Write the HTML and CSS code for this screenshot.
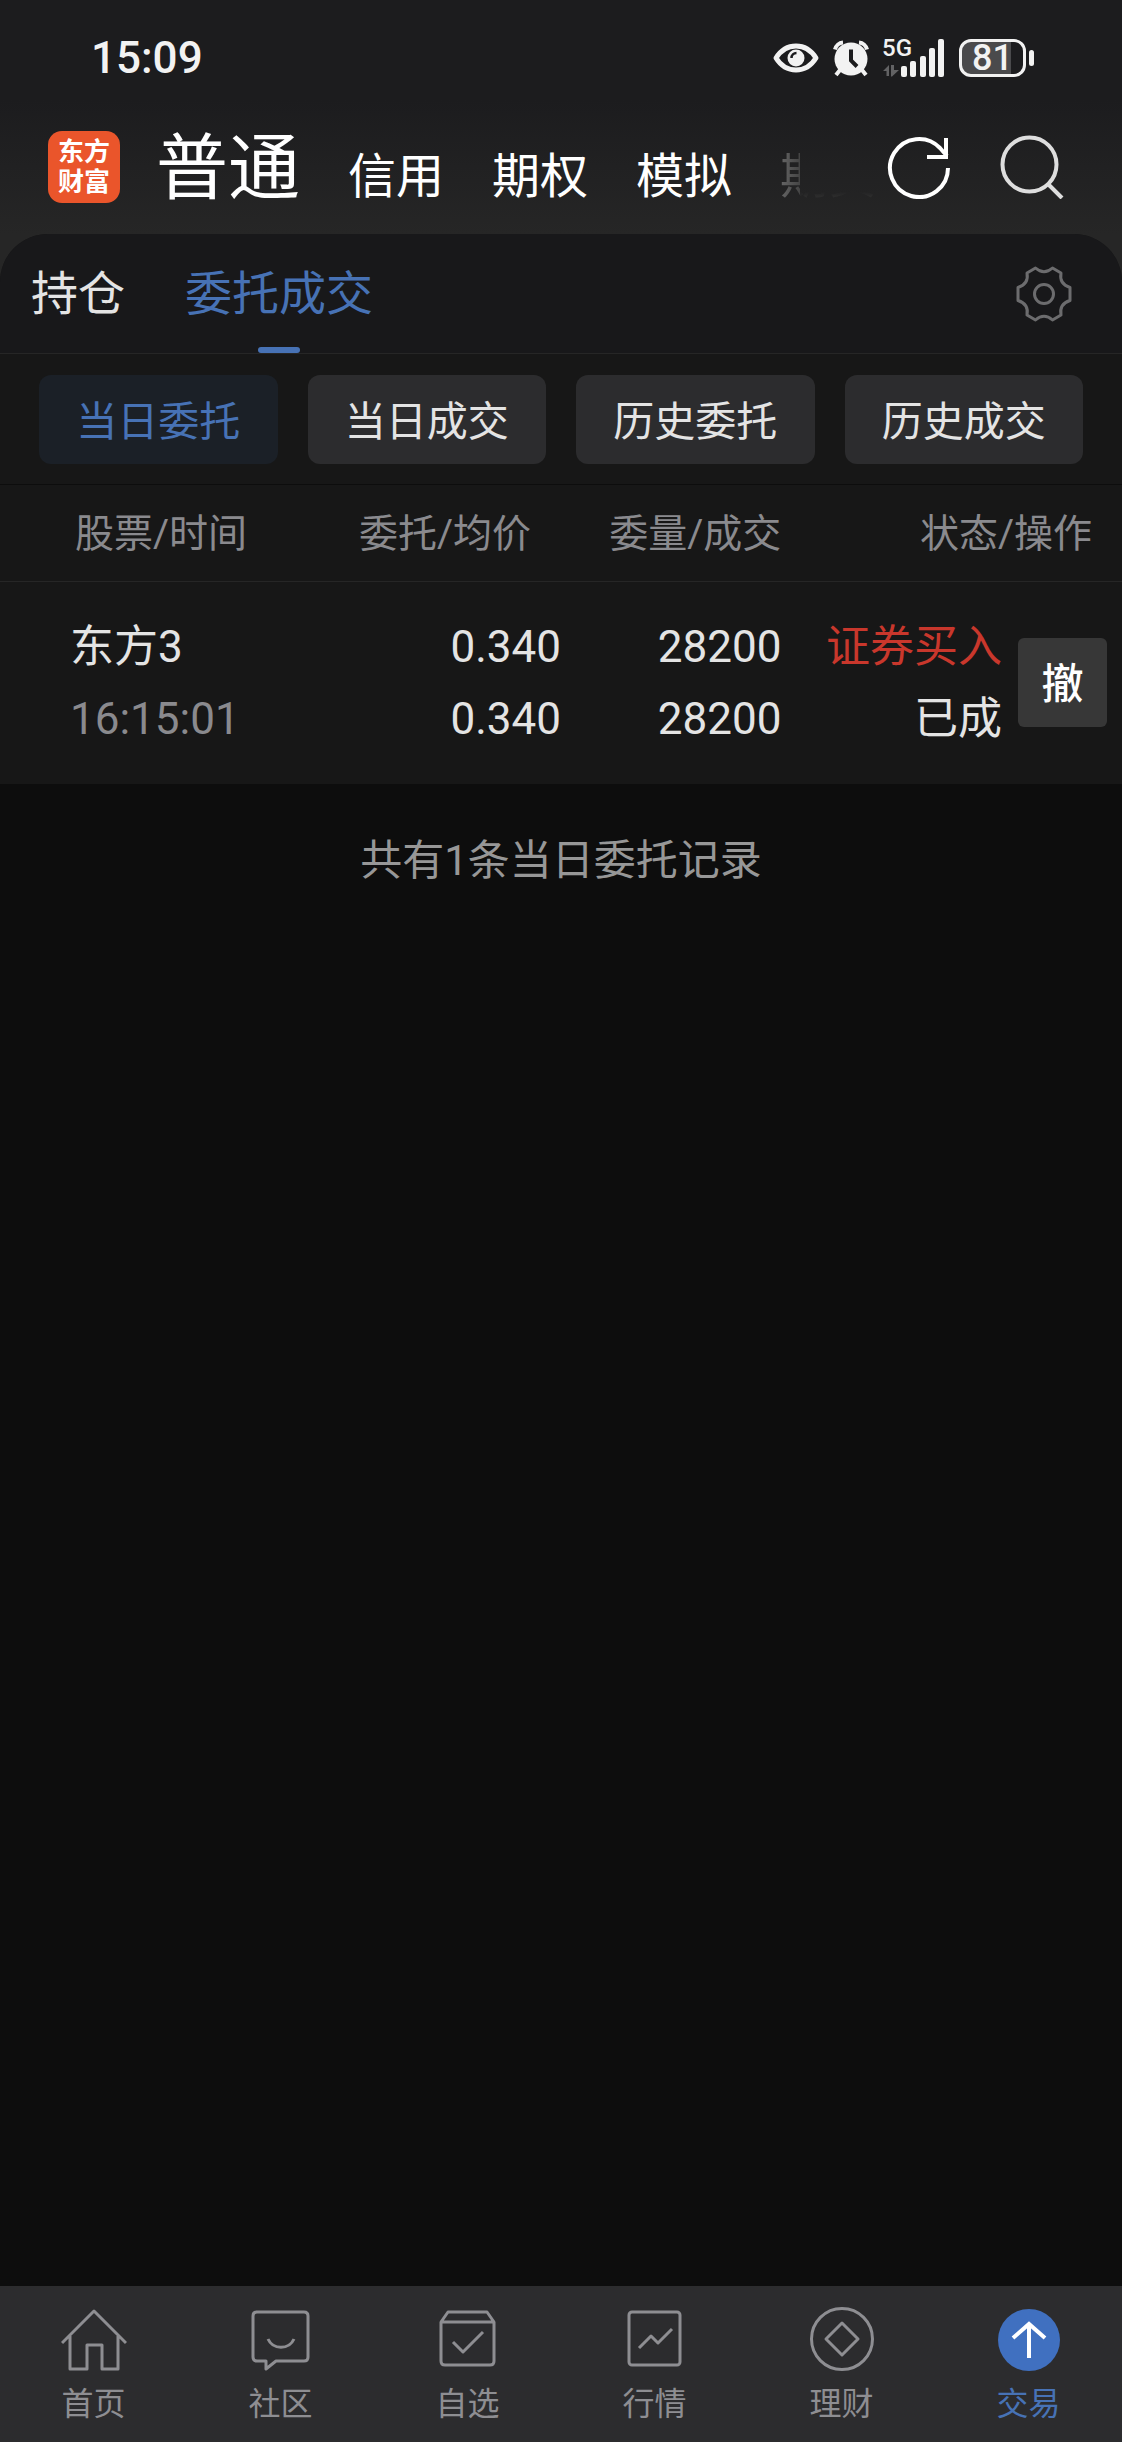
FILE: index.html
```html
<!DOCTYPE html>
<html lang="zh-CN">
<head>
    <meta charset="UTF-8">
    <meta name="viewport" content="width=device-width, initial-scale=1.0">
    <title>委托成交</title>
    <link rel="stylesheet" href="styles.css">
</head>
<body>
    <header class="top">
        <div class="status-bar">
            <span class="clock">15:09</span>
            <div class="status-icons">
                <svg class="eye" width="46" height="30" viewBox="0 0 46 30">
                    <path d="M3 15C8 7 15 3 23 3s15 4 20 12c-5 8-12 12-20 12S8 23 3 15z" fill="none" stroke="#f2f2f2" stroke-width="5" stroke-linejoin="round"/>
                    <circle cx="23" cy="15" r="8.500" fill="#f2f2f2"/>
                    <path d="M18.500 15a5 5 0 0 1 5-5" fill="none" stroke="#1c1c1e" stroke-width="2.500"/>
                </svg>
                <svg class="alarm" width="36" height="37" viewBox="0 0 36 37">
                    <circle cx="18" cy="19" r="16.500" fill="#f2f2f2"/>
                    <path d="M2 9.500A9 9 0 0 1 10 2.500M34 9.500A9 9 0 0 0 26 2.500M7 30l-4 5M29 30l4 5" fill="none" stroke="#f2f2f2" stroke-width="4"/>
                    <path d="M18 9.500v11l6 6" fill="none" stroke="#1c1c1e" stroke-width="4"/>
                </svg>
                <div class="signal">
                    <span class="network">5G</span>
                    <svg width="62" height="38" viewBox="0 0 62 38">
                        <path d="M0 32l6-6v11H3.500v-5zM8 26h3v5h5l-7 6.500H8z" fill="#626264"/>
                        <g fill="#f2f2f2">
                            <rect x="18" y="27" width="6" height="11" rx="2"/>
                            <rect x="27" y="22" width="6" height="16" rx="2"/>
                            <rect x="37" y="17" width="6" height="21" rx="2"/>
                            <rect x="46" y="9" width="6" height="29" rx="2"/>
                            <rect x="55" y="0" width="6" height="38" rx="2"/>
                        </g>
                    </svg>
                </div>
                <div class="battery"><span>81</span></div>
            </div>
        </div>
        <div class="account-bar">
            <a class="logo" href="#">东方<br>财富</a>
            <nav class="accounts">
                <a class="current" href="#">普通</a>
                <a href="#">信用</a>
                <a href="#">期权</a>
                <a href="#">模拟</a>
                <a class="fading" href="#">期货</a>
            </nav>
            <button class="icon-btn" aria-label="刷新">
                <svg width="64" height="64" viewBox="0 0 64 64" fill="none" stroke="#fff" stroke-width="4">
                    <path d="M61 33a29 29 0 1 1-8-20l7 8"/>
                    <path d="M59 3v19H40"/>
                </svg>
            </button>
            <button class="icon-btn" aria-label="搜索">
                <svg width="64" height="64" viewBox="0 0 64 64" fill="none" stroke="#dedede" stroke-width="4">
                    <circle cx="29.500" cy="29.500" r="27"/>
                    <path d="M48 49l14 14"/>
                </svg>
            </button>
        </div>
    </header>

    <main>
        <div class="tabs">
            <a href="#">持仓</a>
            <a class="active" href="#">委托成交</a>
            <button class="icon-btn settings" aria-label="设置">
                <svg width="56" height="56" viewBox="0 0 56 56" fill="none" stroke="#6c6c6e" stroke-width="3" stroke-linejoin="round">
                    <path d="M19.500 2q8.500 7.500 17 0l8.500 5q-2 11 9 14.500v13q-11 3.500-9 14.500l-8.500 5q-8.500-7.500-17 0l-8.500-5q2-11-9-14.500v-13q11-3.500 9-14.500z"/>
                    <circle cx="28" cy="28" r="9.500"/>
                </svg>
            </button>
        </div>

        <div class="filters">
            <button class="active">当日委托</button>
            <button>当日成交</button>
            <button>历史委托</button>
            <button>历史成交</button>
        </div>

        <table class="orders">
            <thead>
                <tr>
                    <th class="name">股票/时间</th>
                    <th class="price">委托/均价</th>
                    <th class="amount">委量/成交</th>
                    <th class="state">状态/操作</th>
                </tr>
            </thead>
            <tbody>
                <tr>
                    <td class="name">东方3<br><span class="time">16:15:01</span></td>
                    <td>0.340<br>0.340</td>
                    <td class="amount">28200<br>28200</td>
                    <td>
                        <div class="state-cell">
                            <div><span class="buy">证券买入</span><br>已成</div>
                            <button class="cancel">撤</button>
                        </div>
                    </td>
                </tr>
            </tbody>
        </table>
    </main>

    <p class="summary">共有1条当日委托记录</p>

    <nav class="bottom-nav">
        <a href="#">
            <svg width="66" height="66" viewBox="0 0 66 66">
                <path d="M1 37L33 5l32 32M9 30v33h17V39h15v24h16V30"/>
            </svg>
            首页
        </a>
        <a href="#">
            <svg width="66" height="66" viewBox="0 0 66 66">
                <path d="M8 6h48q4 0 4 4v41q0 4-4 4H28l-10 8v-8H9q-4 0-4-4V10q0-4 4-4zM20 33c5 11 21 11 26 0"/>
            </svg>
            社区
        </a>
        <a href="#">
            <svg width="66" height="66" viewBox="0 0 66 66">
                <path d="M6 16l7-10h39l7 10M6 16h53v39q0 4-4 4H10q-4 0-4-4zM18 36l10 10 20-20"/>
            </svg>
            自选
        </a>
        <a href="#">
            <svg width="66" height="66" viewBox="0 0 66 66">
                <rect x="7" y="6" width="51" height="53" rx="3"/>
                <path d="M17 42l12-12 7 7 14-14"/>
            </svg>
            行情
        </a>
        <a href="#">
            <svg width="66" height="66" viewBox="0 0 66 66">
                <circle cx="33" cy="33" r="30.500"/>
                <path d="M33 17l16 16-16 16-16-16z"/>
            </svg>
            理财
        </a>
        <a class="active" href="#">
            <svg width="66" height="66" viewBox="0 0 66 66">
                <circle class="disc" cx="33" cy="34" r="31"/>
                <path class="arrow" d="M33 52V19M17 32l16-14 16 14"/>
            </svg>
            交易
        </a>
    </nav>
</body>
</html>
```
FILE: styles.css
```css
* {
    box-sizing: border-box;
}
body {
    margin: 0;
    min-height: 100vh;
    display: flex;
    flex-direction: column;
    background-color: #262626;
    color: #e4e4e4;
    font-family: Roboto, "Noto Sans CJK SC", sans-serif;
}
a {
    color: inherit;
    text-decoration: none;
}
button {
    padding: 0;
    border: none;
    color: inherit;
    font-family: inherit;
    cursor: pointer;
}
svg {
    display: block;
}

/* status bar and account switcher */
.top {
    background: linear-gradient(#1c1c1e 100px, #262626 234px);
}
.status-bar {
    display: flex;
    justify-content: space-between;
    align-items: center;
    height: 116px;
    padding: 0 88px 0 91px;
    color: #f2f2f2;
}
.clock {
    font-size: 44px;
    font-weight: 500;
}
.status-icons {
    display: flex;
    align-items: center;
    gap: 14px;
}
.signal {
    position: relative;
}
.network {
    position: absolute;
    top: -3px;
    left: -1px;
    font-size: 24px;
    line-height: 24px;
    font-weight: 500;
}
.battery {
    position: relative;
    width: 67px;
    height: 38px;
    margin-right: 8px;
    border: 3px solid #f2f2f2;
    border-radius: 12px;
    background: linear-gradient(to right, #4a4a4c 80%, #1c1c1e 80%);
    font-size: 36px;
    line-height: 32px;
    font-weight: 500;
    text-align: center;
}
.battery::after {
    content: '';
    position: absolute;
    top: 8px;
    right: -11px;
    width: 5px;
    height: 16px;
    border-radius: 3px;
    background-color: #f2f2f2;
}
.account-bar {
    display: flex;
    align-items: center;
    height: 118px;
    padding: 0 58px 16px 48px;
}
.logo {
    flex: none;
    width: 72px;
    height: 72px;
    padding-top: 6px;
    border-radius: 14px;
    background-color: #ea552b;
    color: #fff;
    font-size: 26px;
    line-height: 30px;
    font-weight: 700;
    text-align: center;
}
.accounts {
    flex: 1;
    display: flex;
    align-items: baseline;
    gap: 48px;
    padding: 12px 0 0 36px;
    color: #fff;
    font-size: 48px;
    line-height: 72px;
    white-space: nowrap;
}
.accounts .current {
    font-size: 72px;
}
/* last tab fades out before the buttons */
.accounts .fading {
    background: linear-gradient(to right, #666, #444 20px, transparent 20px), linear-gradient(transparent 70%, #303030 80%);
    background-clip: text;
    -webkit-background-clip: text;
    color: transparent;
}
.icon-btn {
    flex: none;
    background: none;
}
.icon-btn + .icon-btn {
    margin-left: 49px;
}

/* order panel */
main {
    border-radius: 48px 48px 0 0;
    background-color: #171717;
}
.tabs {
    display: flex;
    align-items: center;
    gap: 60px;
    height: 120px;
    padding: 0 50px 0 31px;
    border-bottom: 1px solid #262626;
    border-radius: 48px 48px 0 0;
    background-color: #18181a;
    font-size: 47px;
    line-height: 119px;
}
.tabs .active {
    position: relative;
    color: #4772b5;
}
.tabs .active::after {
    content: '';
    position: absolute;
    bottom: 0;
    left: 50%;
    width: 42px;
    height: 6px;
    margin-left: -21px;
    border-radius: 3px;
    background-color: #4772b5;
}
.settings {
    margin-left: auto;
}
.filters {
    display: grid;
    grid-template-columns: repeat(4, 1fr);
    gap: 30px;
    padding: 21px 39px 20px;
    border-bottom: 1px solid #0d0d0d;
}
.filters button {
    height: 89px;
    padding-bottom: 4px;
    border-radius: 12px;
    background-color: #2c2c2e;
    font-size: 41px;
}
.filters .active {
    background-color: #1b2027;
    color: #4772b5;
}
.orders {
    width: 100%;
    table-layout: fixed;
    border-collapse: collapse;
    font-size: 44px;
    line-height: 72px;
    text-align: right;
}
.orders th {
    height: 96px;
    padding: 2px 0 0;
    border-bottom: 1px solid #262626;
    color: #8a8a8e;
    font-size: 39px;
    font-weight: 400;
    text-align: right;
}
.orders td {
    padding: 29px 0;
}
.orders th.name {
    width: 30%;
    padding-left: 75px;
    text-align: left;
}
.orders th.price {
    width: 20%;
    padding-right: 30px;
}
.orders th.amount {
    width: 20%;
}
.orders .amount {
    padding-right: 4px;
}
.orders th.state {
    padding-right: 30px;
}
.orders td.name {
    padding-left: 70px;
    text-align: left;
}
.time {
    color: #8a8a8e;
}
.state-cell {
    display: flex;
    justify-content: flex-end;
    align-items: center;
    gap: 16px;
    padding-right: 15px;
}
.buy {
    color: #c9372c;
}
.cancel {
    width: 89px;
    height: 89px;
    padding-bottom: 4px;
    border-radius: 6px;
    background-color: #373737;
    color: #fff;
    font-size: 42px;
    font-weight: 500;
}

.summary {
    flex: 1;
    margin: 0;
    padding-top: 41px;
    background-color: #0d0d0d;
    color: #979797;
    font-size: 42px;
    line-height: 72px;
    text-align: center;
}

/* bottom navigation */
.bottom-nav {
    display: grid;
    grid-template-columns: repeat(6, 1fr);
    height: 156px;
    background-color: #2c2c2e;
    color: #8e8e92;
    font-size: 32px;
    line-height: 48px;
}
.bottom-nav a {
    display: flex;
    flex-direction: column;
    align-items: center;
    gap: 8px;
    padding-top: 20px;
}
.bottom-nav svg {
    fill: none;
    stroke: #8e8e92;
    stroke-width: 3;
    stroke-linejoin: round;
}
.bottom-nav .active {
    color: #4772b5;
}
.bottom-nav .disc {
    fill: #4070c0;
    stroke: none;
}
.bottom-nav .arrow {
    stroke: #fff;
    stroke-width: 4;
    stroke-linejoin: miter;
}
```
